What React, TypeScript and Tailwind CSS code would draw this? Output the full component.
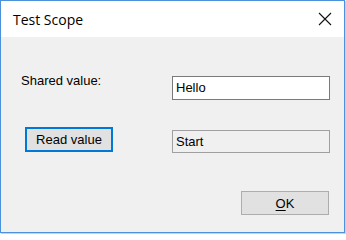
import React from "react";

export default function App() {
  return (
    <div className="w-[346px] h-[234px] bg-white">
      <div className="w-[345px] h-[233px] border border-[#4a92dc] shadow-[1px_1px_0_#bcd6f1] flex flex-col bg-[#f0f0f0]">
        <div className="h-[36px] bg-white flex items-center justify-between pl-[12px] pr-[12px] shrink-0">
          <span className="text-[14px] text-black leading-none mt-[1px]" style={{ fontFamily: '"Open Sans", "Noto Sans", sans-serif' }}>
            Test Scope
          </span>
          <svg width="14" height="14" viewBox="0 0 14 14" className="mt-[0px]">
            <path d="M1 1 L13 13 M13 1 L1 13" stroke="#111" strokeWidth="1.1" fill="none" />
          </svg>
        </div>
        <div
          className="flex-1 flex flex-col pl-[20px] pr-[14px] pt-[35px] text-[13px] text-black"
          style={{ fontFamily: '"Liberation Sans", Arial, sans-serif' }}
        >
          <div className="flex items-start justify-between">
            <span className="leading-[15px] mt-[1px]">Shared value:</span>
            <div className="w-[158px] h-[24px] mt-[4px] bg-white border border-[#7a7a7a] flex items-center pl-[3px]">
              Hello
            </div>
          </div>
          <div className="flex items-start justify-between mt-[27px]">
            <button className="ml-[4px] w-[88px] h-[25px] bg-[#e1e1e1] border-2 border-[#0078d7] flex items-center justify-center leading-none">
              Read value
            </button>
            <div className="w-[158px] h-[23px] mt-[3px] bg-[#f0f0f0] border border-[#a0a0a0] flex items-center pl-[3px]">
              Start
            </div>
          </div>
          <div className="flex justify-end mt-[38px]">
            <button className="mr-[1px] w-[88px] h-[24px] bg-[#e1e1e1] border border-[#adadad] flex items-center justify-center leading-none">
              <span><span className="underline underline-offset-2">O</span>K</span>
            </button>
          </div>
        </div>
      </div>
    </div>
  );
}
